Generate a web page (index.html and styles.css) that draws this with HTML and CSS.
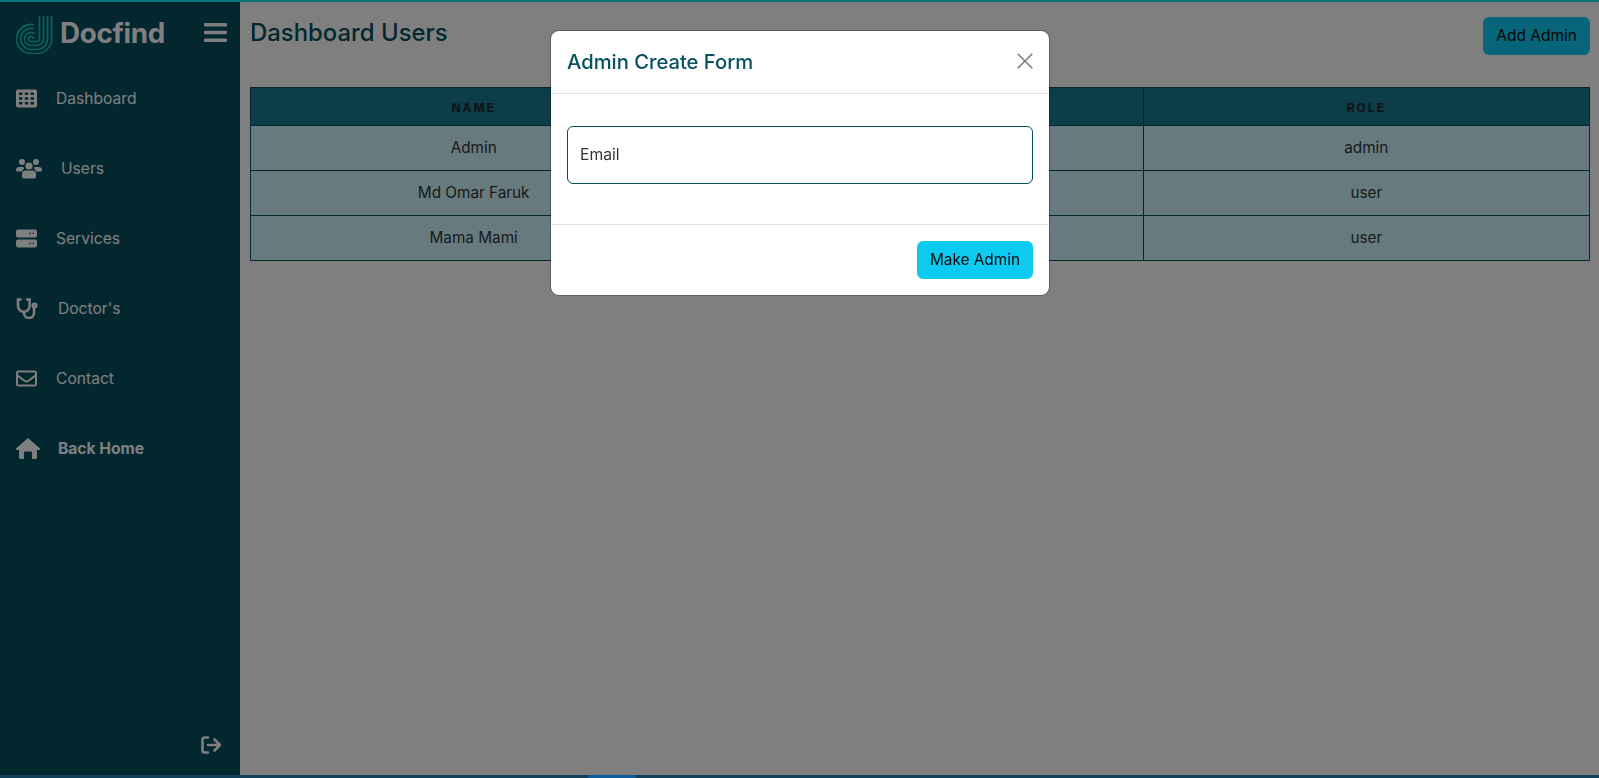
FILE: index.html
```html
<!DOCTYPE html>
<html lang="en">
<head>
<meta charset="utf-8">
<title>Dashboard Users</title>
<link rel="stylesheet" href="styles.css">
</head>
<body>
<div class="app">
  <aside class="sidebar">
    <div class="brand">
      <svg class="logo" viewBox="0 0 38 38" fill="none" stroke="#12c4bc" stroke-width="1.700">
        <path d="M35.500 0V23A14.500 14.500 0 0 1 21 37.500H15A14.500 14.500 0 1 1 18 8.800"/>
        <path d="M31.500 0V23A10.500 10.500 0 0 1 21 33.500H15A10.500 10.500 0 1 1 18 12.900"/>
        <path d="M27.500 0V23A6.500 6.500 0 0 1 21 29.500H15A6.500 6.500 0 1 1 19 17.900"/>
        <path d="M23.500 0V23A2.500 2.500 0 0 1 21 25.500H15A2.500 2.500 0 1 1 17.500 23"/>
      </svg>
      <span class="brand-name">Docfind</span>
      <svg class="burger" viewBox="0 0 23 19" fill="#fff"><rect width="23" height="3.400" rx="1.200"/><rect y="7.800" width="23" height="3.400" rx="1.200"/><rect y="15.600" width="23" height="3.400" rx="1.200"/></svg>
    </div>
    <nav class="menu">
      <a class="item"><svg class="ico" viewBox="0 0 21 18"><path fill="#fff" fill-rule="evenodd" d="M2 0h17a2 2 0 0 1 2 2v14a2 2 0 0 1-2 2H2a2 2 0 0 1-2-2V2a2 2 0 0 1 2-2zM3 3v2.600h3.400V3zm5.800 0v2.600h3.400V3zm5.800 0v2.600H18V3zM3 7.700v2.600h3.400V7.700zm5.800 0v2.600h3.400V7.700zm5.800 0v2.600H18V7.700zM3 12.400V15h3.400v-2.600zm5.800 0V15h3.400v-2.600zm5.800 0V15H18v-2.600z"/></svg><span class="label">Dashboard</span></a>
      <a class="item"><svg class="ico ico-wide" viewBox="0 0 26 20"><g fill="#fff"><circle cx="6" cy="3.500" r="3"/><circle cx="20" cy="3.500" r="3"/><circle cx="13" cy="7.500" r="3.600"/><path d="M0 12a3 3 0 0 1 3-3.500h4a4 4 0 0 1 1.200 1.200A6 6 0 0 0 6 13H1a1 1 0 0 1-1-1zM26 12a3 3 0 0 0-3-3.500h-4a4 4 0 0 0-1.200 1.200A6 6 0 0 1 20 13h5a1 1 0 0 0 1-1zM9.500 12h7a3.500 3.500 0 0 1 3.500 3.500v2A2 2 0 0 1 18 20H8a2 2 0 0 1-2-2v-2.500A3.500 3.500 0 0 1 9.500 12z"/></g></svg><span class="label">Users</span></a>
      <a class="item"><svg class="ico" viewBox="0 0 21 18"><path fill="#fff" fill-rule="evenodd" d="M2 0h17a2 2 0 0 1 2 2v4a2 2 0 0 1-2 2H2a2 2 0 0 1-2-2V2a2 2 0 0 1 2-2zm11.500 3.200v1.400h1.400V3.200zm3 0v1.400h1.400V3.200zM2 10h17a2 2 0 0 1 2 2v4a2 2 0 0 1-2 2H2a2 2 0 0 1-2-2v-4a2 2 0 0 1 2-2zm11.500 3.200v1.400h1.400v-1.400zm3 0v1.400h1.400v-1.400z"/></svg><span class="label">Services</span></a>
      <a class="item"><svg class="ico ico-steth" viewBox="0 0 22 21" fill="none" stroke="#fff" stroke-width="2.500" stroke-linecap="round"><path d="M4.500 1.500H2V8a5.800 5.800 0 0 0 11.600 0V1.500h-2.500"/><path d="M8 14v1a5 5 0 0 0 10 0v-5"/><circle cx="18.500" cy="7.500" r="1.800"/></svg><span class="label">Doctor's</span></a>
      <a class="item"><svg class="ico" viewBox="0 0 21 16"><g fill="none" stroke="#fff" stroke-width="2"><rect x="1" y="1" width="19" height="14" rx="1.500"/><path d="M1.500 5l7 5.300a3.300 3.300 0 0 0 4 0l7-5.300"/></g></svg><span class="label">Contact</span></a>
      <a class="item item-strong"><svg class="ico ico-home" viewBox="0 0 24 21"><path fill="#fff" d="M12 0l12 10.500a.9.900 0 0 1-.6 1.500H21v7.500a1.500 1.500 0 0 1-1.500 1.500H16v-6.500a1 1 0 0 0-1-1H9a1 1 0 0 0-1 1V21H4.500A1.500 1.500 0 0 1 3 19.500V12H.6A.9.900 0 0 1 0 10.500z"/></svg><span class="label">Back Home</span></a>
    </nav>
    <div class="logout">
      <svg viewBox="0 0 21 18" fill="none" stroke="#fff" stroke-width="2.600" stroke-linecap="round" stroke-linejoin="round"><path d="M7 1.500H3.500a2 2 0 0 0-2 2v11a2 2 0 0 0 2 2H7"/><path d="M7 9h12M13.500 3.500L19 9l-5.500 5.500"/></svg>
    </div>
  </aside>
  <main class="content">
    <div class="head-row">
      <h1 class="page-title">Dashboard Users</h1>
      <button class="btn" type="button">Add Admin</button>
    </div>
    <table class="users">
      <thead><tr><th>Name</th><th>Email</th><th>Role</th></tr></thead>
      <tbody>
        <tr><td>Admin</td><td></td><td>admin</td></tr>
        <tr><td>Md Omar Faruk</td><td></td><td>user</td></tr>
        <tr><td>Mama Mami</td><td></td><td>user</td></tr>
      </tbody>
    </table>
  </main>
</div>
<div class="backdrop">
  <div class="modal">
    <div class="modal-head">
      <h2 class="modal-title">Admin Create Form</h2>
      <svg class="close" viewBox="0 0 16 16" fill="none" stroke="#000" stroke-width="1.600"><path d="M.7.7l14.600 14.600M15.300.7L.7 15.300"/></svg>
    </div>
    <div class="modal-body">
      <div class="field">Email</div>
    </div>
    <div class="modal-foot">
      <button class="btn btn-modal" type="button">Make Admin</button>
    </div>
  </div>
</div>
<div class="bottom-bar"><span class="bottom-thumb"></span></div>
</body>
</html>
```
FILE: styles.css
```css
* { box-sizing: border-box; }
html, body { margin: 0; height: 100%; overflow: hidden; }
body {
  font-family: Inter, "Liberation Sans", sans-serif;
  font-size: 15px;
  color: #212529;
  background: #fff;
  border-top: 2px solid #14e8f0;
  position: relative;
}
.app { display: flex; height: calc(100% - 1px); }
.sidebar {
  width: 240px;
  flex: none;
  background: #044e5e;
  color: #fff;
  display: flex;
  flex-direction: column;
  padding: 14px 16px 0 16px;
}
.brand { display: flex; align-items: center; height: 38px; }
.logo { width: 38px; height: 38px; flex: none; }
.brand-name { margin: 0 0 4px 6px; font-size: 27.800px; font-weight: 700; letter-spacing: -.3px; }
.burger { width: 23px; height: 19px; margin: 0 -3px 5px auto; flex: none; }
.menu { display: flex; flex-direction: column; margin-top: 9px; }
.item { display: flex; align-items: center; height: 70px; font-size: 15.600px; color: #fff; }
.ico { width: 21px; height: 21px; flex: none; }
.ico-wide { width: 26px; }
.ico-home { width: 24px; }
.ico-steth { width: 22px; }
.label { margin-left: 19px; }
.ico-steth + .label { margin-left: 20px; }
.ico-home + .label { margin-left: 18px; }
.item-strong { font-weight: 700; }
.logout { margin: auto 2px 23px 0; align-self: flex-end; width: 21px; height: 18px; }
.logout svg { display: block; width: 21px; height: 18px; }
.content { flex: 1; padding: 15px 9px 0 10px; min-width: 0; }
.head-row { display: flex; justify-content: space-between; align-items: flex-start; }
.page-title { margin: 2px 0 0; font-size: 23.900px; font-weight: 500; color: #055160; line-height: 28px; }
.btn {
  height: 38px;
  padding: 0 13px 2px;
  border: 0;
  border-radius: 6px;
  background: #0dcaf0;
  color: #0a0a0a;
  font: 15.500px Inter, "Liberation Sans", sans-serif;
}
.users {
  width: 100%;
  margin-top: 32px;
  border-collapse: collapse;
  table-layout: fixed;
  background: #cff4fc;
  color: #30363b;
}
.users th, .users td { border: 1px solid #055160; text-align: center; }
.users th {
  height: 38px;
  padding: 2px 0 0;
  background: #187a90;
  color: #212529;
  font-size: 12px;
  font-weight: 700;
  letter-spacing: 2px;
  text-transform: uppercase;
}
.users td { height: 45px; padding: 0 0 2px; font-size: 15.300px; font-weight: 400; }
.bottom-bar { position: fixed; left: 0; right: 0; bottom: 0; height: 3px; background: #12405a; z-index: 2; }
.bottom-thumb { position: absolute; left: 588px; width: 48px; top: 0; bottom: 0; background: #0d5c9a; }
.backdrop {
  position: fixed;
  inset: 0;
  background: rgba(0, 0, 0, .5);
  display: flex;
  justify-content: center;
  align-items: flex-start;
  padding: 31px 0 0 1px;
}
.modal {
  width: 498px;
  background: #fff;
  border-radius: 8px;
  box-shadow: 0 0 0 1px rgba(0,0,0,.25);
}
.modal-head {
  height: 63px;
  padding: 0 16px;
  display: flex;
  align-items: center;
  justify-content: space-between;
  border-bottom: 1px solid #dee2e6;
}
.modal-title { margin: 0 0 2px; font-size: 20.200px; font-weight: 500; color: #055160; }
.close { width: 16px; height: 16px; opacity: .5; margin-bottom: 2px; }
.modal-body { padding: 32px 16px 40px; border-bottom: 1px solid #dee2e6; }
.field {
  height: 58px;
  border: 1px solid #055160;
  border-radius: 6px;
  padding: 0 12px 2px;
  display: flex;
  align-items: center;
  font-size: 15.700px;
  color: #30363b;
}
.modal-foot { padding: 16px; display: flex; justify-content: flex-end; }
.btn-modal { font-size: 15.350px; }
```
